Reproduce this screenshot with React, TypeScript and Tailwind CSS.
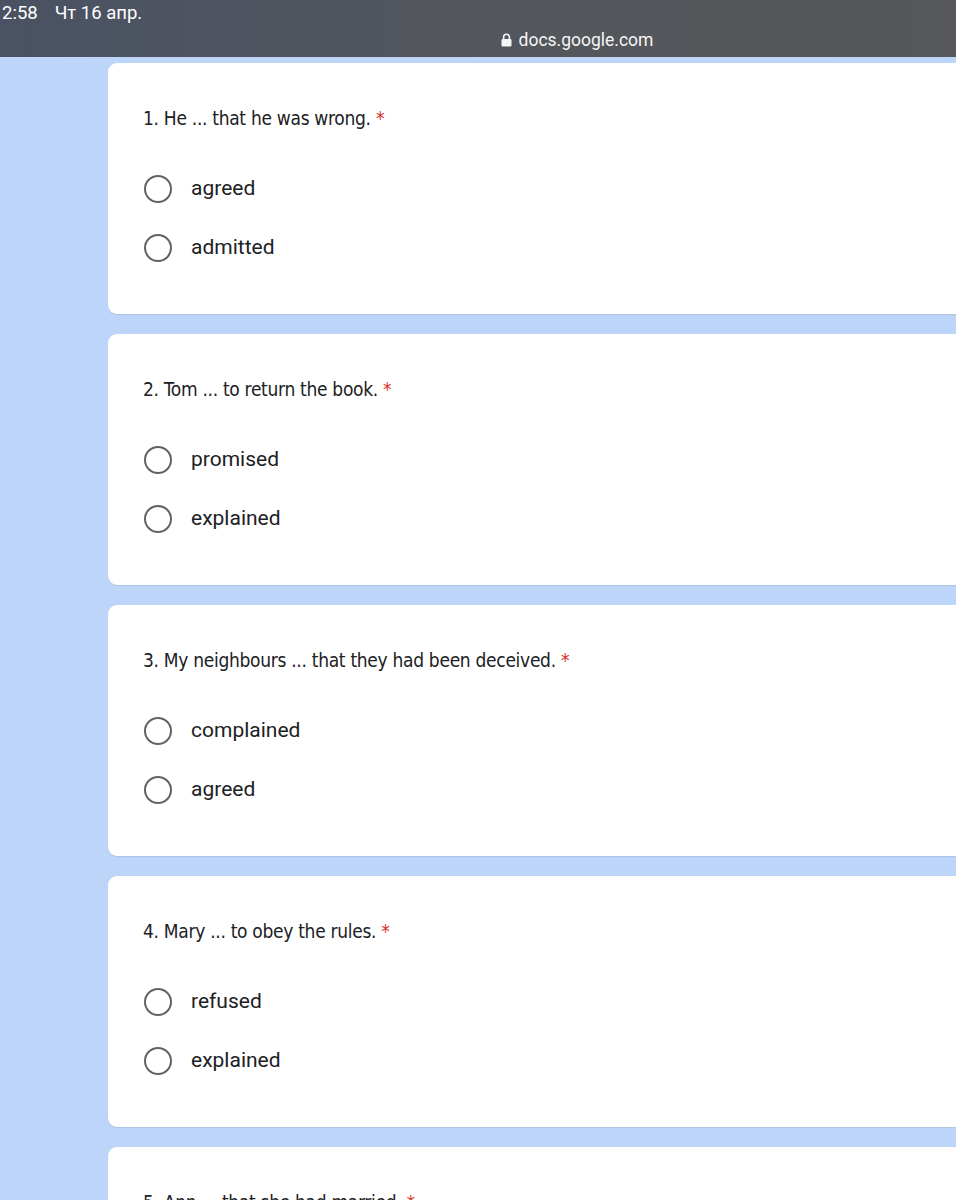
const questions = [
  { n: 1, text: "He ... that he was wrong.", options: ["agreed", "admitted"] },
  { n: 2, text: "Tom ... to return the book.", options: ["promised", "explained"] },
  { n: 3, text: "My neighbours ... that they had been deceived.", options: ["complained", "agreed"] },
  { n: 4, text: "Mary ... to obey the rules.", options: ["refused", "explained"] },
  { n: 5, text: "Ann ... that she had married.", options: ["admitted", "complained"] },
]

function LockIcon() {
  return (
    <svg width="11" height="14" viewBox="0 0 11 14" aria-hidden="true">
      <path d="M2.6 6V4.2a2.9 2.9 0 0 1 5.8 0V6" fill="none" stroke="white" strokeWidth="1.6" />
      <rect x="0.5" y="6" width="10" height="7.5" rx="1.2" fill="white" />
    </svg>
  )
}

function TopBar() {
  return (
    <header className="h-[57px] bg-gradient-to-r from-[#4a5263] via-[#53565c] to-[#56575a] text-white font-['Roboto',sans-serif]">
      <div className="flex h-[28px] items-center gap-[17px] pl-[2px] text-[18.5px]">
        <span>2:58</span>
        <span>Чт 16 апр.</span>
      </div>
      <div className="flex h-[24px] items-center justify-center gap-[7px] pl-[198px] text-[17.5px] opacity-95">
        <LockIcon />
        <span>docs.google.com</span>
      </div>
    </header>
  )
}

function Radio({ label }: { label: string }) {
  return (
    <label className="flex h-[44px] items-center gap-[19px] pl-[1px]">
      <span className="size-[28px] shrink-0 rounded-full border-[2.5px] border-[#5f6368]" />
      <span className="font-['Roboto',sans-serif] text-[21px] text-[#202124]">{label}</span>
    </label>
  )
}

function QuestionCard({ n, text, options }: { n: number; text: string; options: string[] }) {
  return (
    <section className="ml-[108px] rounded-l-[9px] bg-white pt-[41px] pb-[44px] pl-[35px] shadow-[0_1px_1px_rgba(60,64,67,0.12)]">
      <h2 className="h-[28px] font-['DejaVu_Sans_Condensed','DejaVu_Sans',sans-serif] text-[19px] leading-[28px] tracking-[-0.3px] text-[#202124]">
        {n}. {text} <span className="text-[#d93025]">*</span>
      </h2>
      <div className="mt-[35px] flex flex-col gap-[15px]">
        {options.map((o) => (
          <Radio key={o} label={o} />
        ))}
      </div>
    </section>
  )
}

export default function App() {
  return (
    <div className="h-[1200px] overflow-hidden bg-[#bdd5f8]">
      <TopBar />
      <main className="flex flex-col gap-[20px] pt-[6px]">
        {questions.map((q) => (
          <QuestionCard key={q.n} {...q} />
        ))}
      </main>
    </div>
  )
}
